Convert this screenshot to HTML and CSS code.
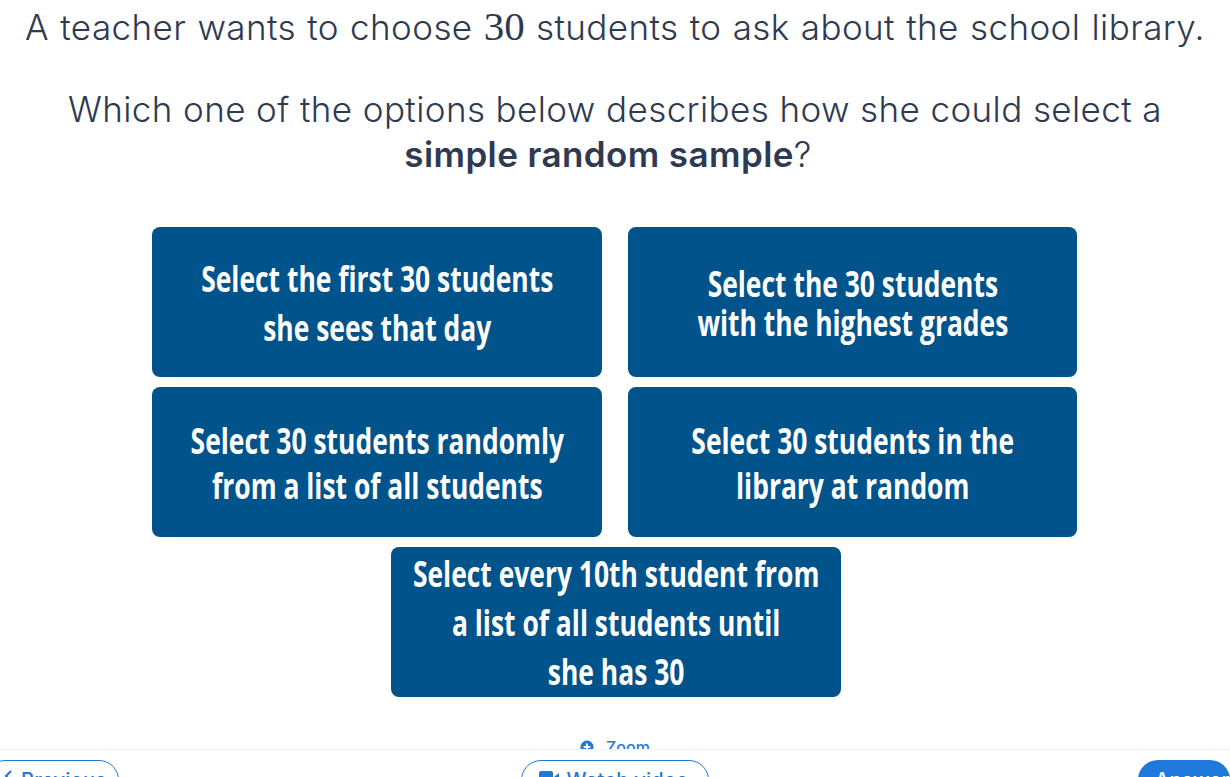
FILE: index.html
```html
<!DOCTYPE html>
<html lang="en">
<head>
<meta charset="utf-8">
<title>Simple random sample</title>
<link rel="stylesheet" href="styles.css">
</head>
<body>
<main class="main">
  <div class="question">
    <p class="line first">A teacher wants to choose <span class="math">30</span> students to ask about the school library.</p>
    <p class="line second">Which one of the options below describes how she could select a <br><b>simple random sample</b><span class="mark">?</span></p>
  </div>
  <div class="options">
    <button class="option"><span class="opt-text lh-49">Select the first 30 students<br>she sees that day</span></button>
    <button class="option"><span class="opt-text lh-39">Select the 30 students<br>with the highest grades</span></button>
    <button class="option"><span class="opt-text lh-45">Select 30 students randomly<br>from a list of all students</span></button>
    <button class="option"><span class="opt-text lh-45">Select 30 students in the<br>library at random</span></button>
    <button class="option wide"><span class="opt-text lh-49">Select every 10th student from<br>a list of all students until<br>she has 30</span></button>
  </div>
  <div class="zoom">
    <svg class="zoom-icon" viewBox="0 0 14 14" width="14" height="14"><circle cx="7" cy="7" r="6.5" fill="#1f78dc"/><path d="M7 3.6v6.8M3.6 7h6.8" stroke="#fff" stroke-width="1.8"/></svg>
    <span>Zoom</span>
  </div>
</main>
<footer class="footer">
  <a class="btn prev"><svg class="chev" viewBox="0 0 10 14" width="10" height="14"><path d="M8 2L3 7l5 5" fill="none" stroke="#1f78dc" stroke-width="2"/></svg>Previous</a>
  <a class="btn video"><svg class="cam" viewBox="0 0 20 14" width="20" height="14"><rect x="0" y="0" width="14" height="14" rx="2" fill="#1f78dc"/><path d="M15 6l5-4v10l-5-4z" fill="#1f78dc"/></svg>Watch video</a>
  <a class="btn answer">Answer</a>
</footer>
</body>
</html>
```
FILE: styles.css
```css
* { box-sizing: border-box; }
html, body { margin: 0; height: 777px; overflow: hidden; background: #fff; }
body { font-family: Inter, "Liberation Sans", sans-serif; color: #2e3a51; }
.main { height: 749px; overflow: hidden; display: flex; flex-direction: column; align-items: center; }
.question { width: 100%; text-align: center; font-size: 35px; font-weight: 300; line-height: 45px; padding-top: 4px; letter-spacing: .4px; }
.line { margin: 0; white-space: nowrap; }
.first { word-spacing: 1px; }
.second { margin-top: 37px; }
.second b { font-weight: 600; }
.mark { margin-right: 14px; }
.math { font-family: "Liberation Serif", serif; font-size: 41px; letter-spacing: 0; font-weight: 400; }
.options { width: 925px; margin: 50px 1px 0 0; display: grid; grid-template-columns: 450px 449px; column-gap: 26px; row-gap: 10px; justify-content: center; }
.option { height: 150px; border: 0; border-radius: 8px; background: #01538c; color: #fff; display: flex; align-items: center; justify-content: center; text-align: center; padding: 1px 0 0; font-family: "Open Sans", sans-serif; }
.wide { grid-column: 1 / 3; justify-self: center; width: 450px; margin-left: 3px; }
.opt-text { display: block; font-size: 35px; font-weight: 700; white-space: nowrap; transform: scaleX(.755); }
.lh-49 { line-height: 49px; }
.lh-39 { line-height: 39px; }
.lh-45 { line-height: 45px; }
.zoom { margin-top: 40px; display: flex; align-items: center; gap: 12px; color: #1f78dc; font-size: 16px; font-weight: 500; height: 20px; flex: none; }
.footer { height: 28px; border-top: 1px solid #f1f1f9; padding-top: 10px; display: flex; justify-content: space-between; overflow: hidden; font-size: 20px; font-weight: 500; color: #1f78dc; }
.btn { display: flex; align-items: flex-start; height: 48px; border: 1.5px solid #1f78dc; border-radius: 20px; padding-top: 7px; letter-spacing: .3px; }
.prev { width: 134px; margin-left: -15px; padding-left: 17px; gap: 8px; }
.chev { margin-top: 1px; flex: none; }
.cam { margin-top: 3px; flex: none; }
.video { width: 188px; gap: 8px; padding-left: 17px; margin-right: 28px; }
.answer { width: 92px; background: #1f78dc; color: #fff; padding-left: 17px; border: 0; padding-top: 8px; }
```
